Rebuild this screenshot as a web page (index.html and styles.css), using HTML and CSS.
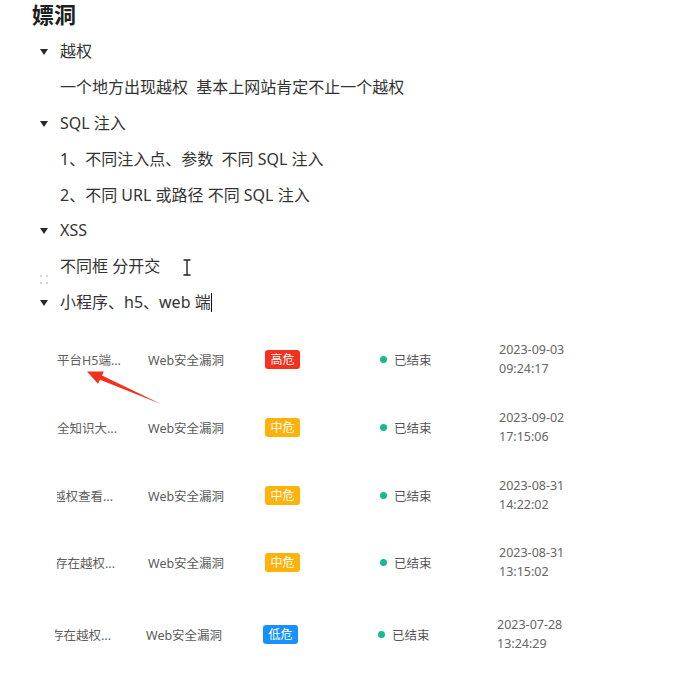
FILE: index.html
```html
<!DOCTYPE html>
<html lang="zh-CN">
<head>
<meta charset="utf-8">
<title>嫖洞</title>
<link rel="stylesheet" href="styles.css">
</head>
<body>
<div class="page">
  <h1 class="title">嫖洞</h1>
  <ul class="outline">
    <li class="item toggle"><span class="tri"></span>越权</li>
    <li class="item">一个地方出现越权&nbsp;&nbsp;基本上网站肯定不止一个越权</li>
    <li class="item toggle"><span class="tri"></span>SQL 注入</li>
    <li class="item">1、不同注入点、参数&nbsp;&nbsp;不同 SQL 注入</li>
    <li class="item">2、不同 URL 或路径 不同 SQL 注入</li>
    <li class="item toggle"><span class="tri"></span>XSS</li>
    <li class="item">不同框 分开交<svg class="ibeam" width="10" height="17" viewBox="0 0 10 17"><path d="M1.5 1h7M5 1v15M1.5 16h7" stroke="#222" stroke-width="1.4" fill="none"/></svg></li>
    <li class="item toggle has-handle"><span class="handle"><i></i><i></i><i></i><i></i></span><span class="tri"></span>小程序、h5、web 端<span class="caret"></span></li>
  </ul>

  <div class="table">
    <div class="row">
      <div class="c-name"><span>平台H5端...</span></div>
      <div class="c-type">Web安全漏洞</div>
      <div class="c-level"><span class="badge high">高危</span></div>
      <div class="c-status"><span class="dot"></span>已结束</div>
      <div class="c-date">2023-09-03<br>09:24:17</div>
    </div>
    <div class="row">
      <div class="c-name"><span>全知识大...</span></div>
      <div class="c-type">Web安全漏洞</div>
      <div class="c-level"><span class="badge mid">中危</span></div>
      <div class="c-status"><span class="dot"></span>已结束</div>
      <div class="c-date">2023-09-02<br>17:15:06</div>
    </div>
    <div class="row">
      <div class="c-name"><span class="cut-a">越权查看...</span></div>
      <div class="c-type">Web安全漏洞</div>
      <div class="c-level"><span class="badge mid">中危</span></div>
      <div class="c-status"><span class="dot"></span>已结束</div>
      <div class="c-date">2023-08-31<br>14:22:02</div>
    </div>
    <div class="row">
      <div class="c-name"><span class="cut-b">存在越权...</span></div>
      <div class="c-type">Web安全漏洞</div>
      <div class="c-level"><span class="badge mid">中危</span></div>
      <div class="c-status"><span class="dot"></span>已结束</div>
      <div class="c-date">2023-08-31<br>13:15:02</div>
    </div>
    <div class="row last">
      <div class="c-name"><span class="cut-c">存在越权...</span></div>
      <div class="c-type">Web安全漏洞</div>
      <div class="c-level"><span class="badge low">低危</span></div>
      <div class="c-status"><span class="dot"></span>已结束</div>
      <div class="c-date">2023-07-28<br>13:24:29</div>
    </div>
  </div>

  <svg class="arrow" width="683" height="675" viewBox="0 0 683 675">
    <polygon points="87,371.5 103.8,371.6 102,375.6 161,404 100,379.8 98,383.8" fill="#f2301c"/>
  </svg>
</div>
</body>
</html>
```

FILE: styles.css
```css
* { box-sizing: border-box; }
html, body { margin: 0; padding: 0; background: #fff; }
body {
  font-family: "Noto Sans", "Noto Sans CJK SC", sans-serif;
  color: #333;
}
.page {
  position: relative;
  width: 683px;
  height: 675px;
  overflow: hidden;
}
.title {
  margin: 0;
  padding: 0 0 0 32px;
  height: 33px;
  line-height: 28px;
  font-size: 22px;
  font-weight: 700;
  color: #1f1f1f;
}
.outline {
  list-style: none;
  margin: 0;
  padding: 0;
}
.item {
  position: relative;
  height: 35.9px;
  line-height: 36px;
  padding-left: 60px;
  font-size: 16px;
  color: #333;
  display: flex;
  align-items: center;
  white-space: pre;
}
.tri {
  position: absolute;
  left: 40px;
  top: 16px;
  width: 0;
  height: 0;
  border-left: 4px solid transparent;
  border-right: 4px solid transparent;
  border-top: 6px solid #2a2a2a;
}
.ibeam { margin-left: 22px; margin-top: 2px; }
.caret {
  display: inline-block;
  width: 1px;
  height: 19px;
  background: #111;
  margin-left: 0;
}
.handle {
  position: absolute;
  left: 40px;
  top: -9px;
  width: 8px;
  height: 9px;
  display: grid;
  grid-template-columns: 2px 2px;
  grid-template-rows: 2px 2px;
  column-gap: 4px;
  row-gap: 5px;
}
.handle i { display: block; width: 2px; height: 2px; background: #c9c9c9; border-radius: 1px; }

.table {
  margin-top: 6px;
  font-size: 12.5px;
  color: #666;
}
.row {
  height: 67.6px;
  display: flex;
  align-items: center;
  padding-left: 57px;
}
.row.last {
  margin-top: 3px;
  padding-left: 55px;
  padding-top: 3px;
}
.c-name {
  width: 91px;
  overflow: hidden;
  white-space: nowrap;
  color: #5e5e5e;
}
.c-name span { display: inline-block; }
.c-name .cut-a { margin-left: -4px; }
.c-name .cut-b { margin-left: -2px; }
.c-name .cut-c { margin-left: -4px; }
.c-type { width: 117px; color: #5a5a5a; }
.c-level { width: 115px; display: flex; align-items: center; }
.badge {
  display: inline-block;
  width: 35px;
  height: 19px;
  line-height: 19px;
  text-align: center;
  border-radius: 3px;
  color: #fff;
  font-size: 12px;
}
.badge.high { background: #f5301d; }
.badge.mid { background: #ffb20a; }
.badge.low { background: #1890ff; }
.c-status {
  width: 119px;
  display: flex;
  align-items: center;
  color: #555;
}
.dot {
  width: 7px;
  height: 7px;
  border-radius: 50%;
  background: #15bb8f;
  margin-right: 7px;
}
.c-date {
  line-height: 19px;
  color: #666;
  margin-top: -1px;
}
.arrow {
  position: absolute;
  left: 0;
  top: 0;
  pointer-events: none;
}
```
